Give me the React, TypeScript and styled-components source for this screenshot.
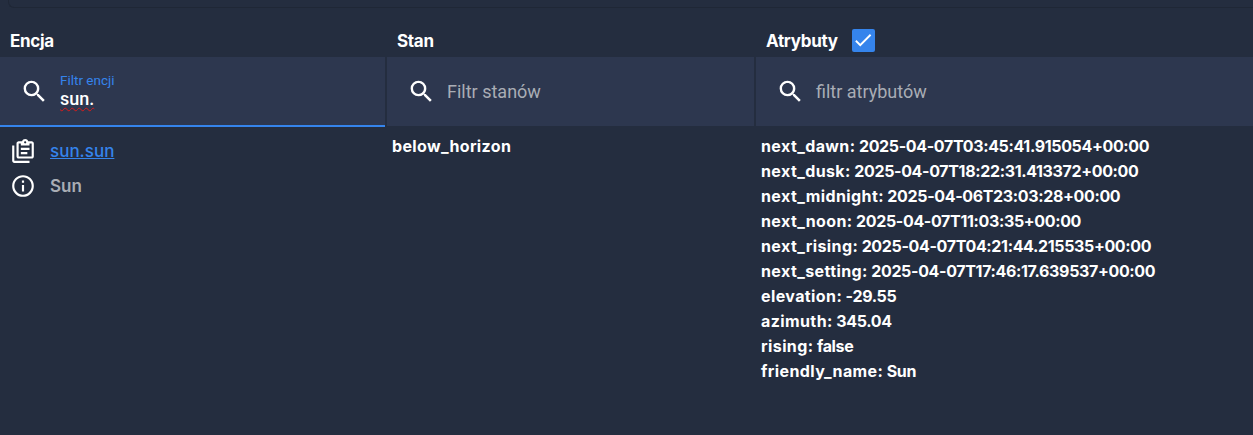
import styled, { createGlobalStyle } from 'styled-components'

const GlobalStyle = createGlobalStyle`
    html, body {
        margin: 0;
        padding: 0;
        background: #242d3f;
    }
`

const Page = styled.div`
    width: 1253px;
    height: 435px;
    overflow: hidden;
    background: #242d3f;
    color: #fff;
    font-family: Inter, 'Liberation Sans', sans-serif;
`

const TopBar = styled.div`
    height: 7px;
    margin-left: 8px;
    border: 1px solid #1f2736;
    border-top: 0;
    border-right: 0;
    border-radius: 0 0 0 6px;
`

const Table = styled.div`
    display: grid;
    grid-template-columns: 387px 369px 497px;
    margin-top: 21px;
`

const HeaderCell = styled.div`
    height: 28px;
    display: flex;
    align-items: center;
    gap: 14px;
    padding-left: 10px;
    font-size: 17px;
    font-weight: 700;
    letter-spacing: -0.3px;
    line-height: 30px;
    margin-top: -3px;
    margin-bottom: 3px;
`

const HeaderLabel = styled.span`
    padding-top: 2px;
`

const CheckBox = styled.span`
    width: 23px;
    height: 23px;
    display: flex;
    align-items: center;
    justify-content: center;
    border-radius: 2px;
    background: #3584ec;
`

const FilterCell = styled.div<{ $active?: boolean; $last?: boolean }>`
    height: 69px;
    display: flex;
    align-items: center;
    box-sizing: border-box;
    margin-right: ${({ $last }) => ($last ? 0 : 2)}px;
    background: #2d374f;
    ${({ $active }) =>
        $active &&
        'height: 70px; margin-bottom: -1px; border-bottom: 2px solid #3584ec;'}
`

const SearchIcon = styled.svg`
    width: 29px;
    height: 29px;
    flex: none;
    margin-left: 20px;
    fill: #fff;
`

const FilterBody = styled.div`
    margin-left: 11px;
    display: flex;
    flex-direction: column;
`

const FloatingLabel = styled.span`
    font-family: Roboto, sans-serif;
    font-size: 13.5px;
    line-height: 15px;
    color: #3584ec;
`

const TypedValue = styled.span`
    font-family: Roboto, sans-serif;
    font-size: 18px;
    line-height: 21px;
    font-weight: 500;
    text-decoration: underline wavy #d81b1b 1px;
    text-underline-offset: 2px;
`

const Placeholder = styled.span`
    margin-left: 11px;
    font-family: Roboto, sans-serif;
    font-size: 18px;
    color: #a9adb5;
`

const EntityCell = styled.div`
    padding: 13px 0 0 10px;
    display: flex;
    flex-direction: column;
    gap: 11px;
`

const EntityRow = styled.div`
    display: flex;
    align-items: center;
    gap: 14px;
    height: 24px;
    font-size: 17px;
    font-weight: 600;
`

const RowIcon = styled.svg`
    width: 26px;
    height: 26px;
    flex: none;
    fill: #fff;
`

const EntityLink = styled.a`
    color: #3584ec;
    text-decoration: underline;
    font-weight: 500;
`

const FriendlyName = styled.span`
    color: #a9adb5;
`

const StateCell = styled.div`
    padding: 10px 0 0 5px;
    font-size: 16px;
    font-weight: 700;
    line-height: 20px;
    letter-spacing: 0.35px;
`

const AttributesCell = styled.div`
    padding: 8px 0 0 5px;
`

const AttributeLine = styled.div`
    font-size: 16px;
    font-weight: 700;
    line-height: 25px;
    white-space: nowrap;
    letter-spacing: -0.35px;
`

const AttributeKey = styled.span`
    letter-spacing: 0.4px;
`

const attributes = [
    ['next_dawn', '2025-04-07T03:45:41.915054+00:00'],
    ['next_dusk', '2025-04-07T18:22:31.413372+00:00'],
    ['next_midnight', '2025-04-06T23:03:28+00:00'],
    ['next_noon', '2025-04-07T11:03:35+00:00'],
    ['next_rising', '2025-04-07T04:21:44.215535+00:00'],
    ['next_setting', '2025-04-07T17:46:17.639537+00:00'],
    ['elevation', '-29.55'],
    ['azimuth', '345.04'],
    ['rising', 'false'],
    ['friendly_name', 'Sun'],
]

const searchPath =
    'M9.5 3A6.5 6.5 0 0 1 16 9.5c0 1.61-.59 3.09-1.56 4.23l.27.27h.79l5 5-1.5 1.5-5-5v-.79l-.27-.27A6.516 6.516 0 0 1 9.5 16 6.5 6.5 0 0 1 3 9.5 6.5 6.5 0 0 1 9.5 3m0 2C7 5 5 7 5 9.5S7 14 9.5 14 14 12 14 9.5 12 5 9.5 5Z'

const Search = () => (
    <SearchIcon viewBox="0 0 24 24">
        <path d={searchPath} />
    </SearchIcon>
)

const App = () => {
    return (
        <Page>
            <GlobalStyle />
            <TopBar />
            <Table>
                <HeaderCell>
                    <HeaderLabel>Encja</HeaderLabel>
                </HeaderCell>
                <HeaderCell>
                    <HeaderLabel>Stan</HeaderLabel>
                </HeaderCell>
                <HeaderCell>
                    <HeaderLabel>Atrybuty</HeaderLabel>
                    <CheckBox>
                        <svg width="22" height="22" viewBox="0 0 24 24" fill="#fff">
                            <path d="M21 7 9 19l-5.5-5.5 1.41-1.41L9 16.17 19.59 5.59 21 7Z" />
                        </svg>
                    </CheckBox>
                </HeaderCell>

                <FilterCell $active>
                    <Search />
                    <FilterBody>
                        <FloatingLabel>Filtr encji</FloatingLabel>
                        <TypedValue>sun.</TypedValue>
                    </FilterBody>
                </FilterCell>
                <FilterCell>
                    <Search />
                    <Placeholder>Filtr stanów</Placeholder>
                </FilterCell>
                <FilterCell $last>
                    <Search />
                    <Placeholder>filtr atrybutów</Placeholder>
                </FilterCell>

                <EntityCell>
                    <EntityRow>
                        <RowIcon viewBox="0 0 24 24">
                            <path d="M4 7v14h14v2H4c-1.1 0-2-.9-2-2V7h2m16-4c1.1 0 2 .9 2 2v12c0 1.1-.9 2-2 2H8c-1.1 0-2-.9-2-2V5c0-1.1.9-2 2-2h3.18C11.6 1.84 12.7 1 14 1s2.4.84 2.82 2H20m-6 0c-.55 0-1 .45-1 1s.45 1 1 1 1-.45 1-1-.45-1-1-1M10 7V5H8v12h12V5h-2v2h-8m0 2h8v2h-8V9m0 4h6v2h-6v-2Z" />
                        </RowIcon>
                        <EntityLink>sun.sun</EntityLink>
                    </EntityRow>
                    <EntityRow>
                        <RowIcon viewBox="0 0 24 24">
                            <path d="M11 9h2V7h-2m1 13c-4.41 0-8-3.59-8-8s3.59-8 8-8 8 3.59 8 8-3.59 8-8 8m0-18A10 10 0 0 0 2 12a10 10 0 0 0 10 10 10 10 0 0 0 10-10A10 10 0 0 0 12 2m-1 15h2v-6h-2v6Z" />
                        </RowIcon>
                        <FriendlyName>Sun</FriendlyName>
                    </EntityRow>
                </EntityCell>
                <StateCell>below_horizon</StateCell>
                <AttributesCell>
                    {attributes.map(([key, value]) => (
                        <AttributeLine key={key}>
                            <AttributeKey>{key}:</AttributeKey> {value}
                        </AttributeLine>
                    ))}
                </AttributesCell>
            </Table>
        </Page>
    )
}

export default App
